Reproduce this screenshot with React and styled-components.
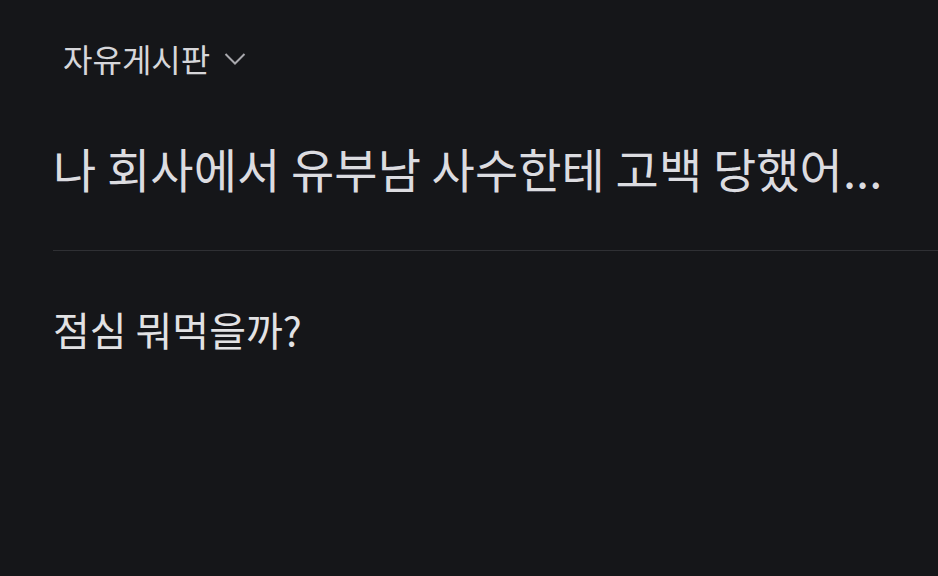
import React from "react"
import styled, {createGlobalStyle} from "styled-components"

const Global = createGlobalStyle`
    html, body {
        margin: 0;
        padding: 0;
        background: #151619;
    }
    body {
        font-family: "Noto Sans CJK KR", "Noto Sans", sans-serif;
        color: #dcdce0;
    }
`
const Page = styled.div`
    height: 576px;
    overflow: hidden;
    padding-left: 53px;
`
const Board = styled.button`
    display: flex;
    align-items: center;
    gap: 14px;
    margin: 36px 0 0 10px;
    padding: 0;
    background: none;
    border: none;
    color: #d6d6da;
    font-family: inherit;
    font-size: 32px;
    line-height: 44px;
    cursor: pointer;
    svg {
        margin-top: 2px;
    }
`
const Title = styled.h1`
    margin: 58px 0 0;
    font-size: 47px;
    font-weight: 400;
    line-height: 60px;
    letter-spacing: 0.1px;
    color: #dcdce0;
    white-space: nowrap;
`
const Divider = styled.hr`
    margin: 52px 0 0;
    border: none;
    border-top: 1px solid #2f3034;
`
const Body = styled.p`
    margin: 53px 0 0;
    font-size: 40px;
    line-height: 50px;
    color: #e2e2e4;
`

const Chevron = () => (
    <svg width="22" height="14" viewBox="0 0 22 14" fill="none">
        <path d="M1.5 2 L11 11.5 L20.5 2" stroke="#a8a8ad" strokeWidth="2" />
    </svg>
)

const App = () => (
    <Page>
        <Global />
        <Board>
            자유게시판
            <Chevron />
        </Board>
        <Title>나 회사에서 유부남 사수한테 고백 당했어...</Title>
        <Divider />
        <Body>점심 뭐먹을까?</Body>
    </Page>
)

export default App
